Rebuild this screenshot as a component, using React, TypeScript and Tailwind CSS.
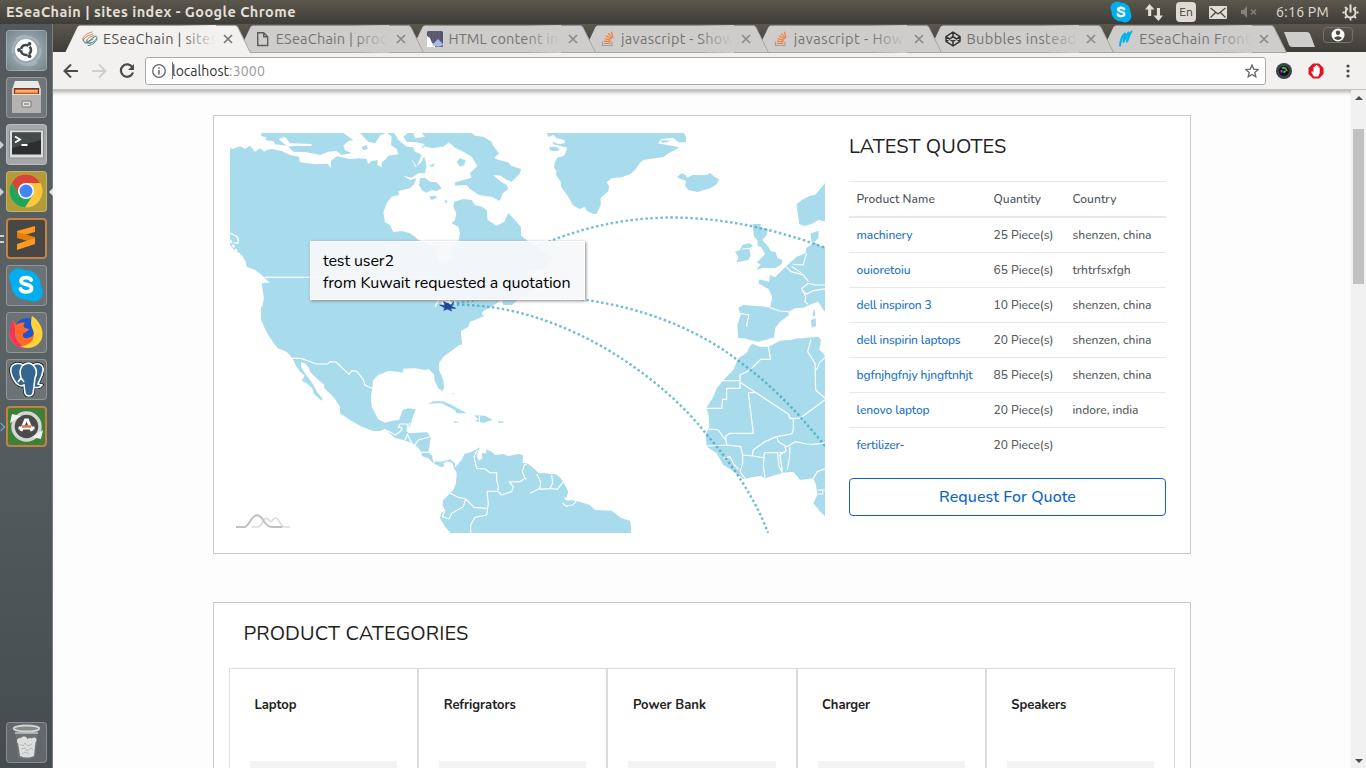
import React, { useLayoutEffect, useRef } from "react";

/* Text tracked so that it fills the given width */
function Fit({ w, className = "", children }: { w: number; className?: string; children: React.ReactNode }) {
  const ref = useRef<HTMLSpanElement>(null);
  useLayoutEffect(() => {
    const el = ref.current;
    if (!el) return;
    el.style.letterSpacing = "0px";
    const n = (el.textContent || "").length;
    el.style.letterSpacing = (w - el.getBoundingClientRect().width) / n + "px";
  }, [w, children]);
  return <span ref={ref} className={"inline-block whitespace-pre " + className}>{children}</span>;
}

const UB = "font-['Ubuntu','Noto_Sans',sans-serif]";

function Swirl() {
  return (
    <svg width="16" height="16" viewBox="0 0 16 16" fill="none" strokeWidth="1" strokeLinecap="round">
      <path d="M1 7.500C2 4 6 2 10 1M1.500 9.500c1-4 5-5 9-6.500M5 9c1-3 4-3 7-4.500" stroke="#d98456" />
      <path d="M6 14.500c3 0 7-2 9-6.500M8 12c3-.5 6-2 7-6M3 12c3 1.500 4-2 8-4" stroke="#3f8c8a" />
      <path d="M1 8c0 4 3 4 6 2s4-4 7-5M5 9c-1 3 1 4 4 3" stroke="#5a7772" />
    </svg>
  );
}
function DocIcon() {
  return (
    <svg width="16" height="16" viewBox="0 0 16 16" fill="none" stroke="#5c5c5c" strokeWidth="1.400">
      <path d="M2.700 1.700h6l4 4v8.800h-10zM8.700 1.700v4h4" />
    </svg>
  );
}
function ChartIcon() {
  return (
    <svg width="16" height="16" viewBox="0 0 16 16">
      <rect width="16" height="16" rx="1.500" fill="#55556b" />
      <path d="M3 0v8M6 0v12M9 0v12M12 0v8" stroke="#66667c" />
      <path d="M0 5l3 2 2 5 3 2v2H0z" fill="#fff" />
      <path d="M5 14l3-3 3-3 3 3 2 2v1q-4 3-8 1z" fill="#a5bbe2" />
    </svg>
  );
}
function StackIcon() {
  return (
    <svg width="16" height="16" viewBox="0 0 16 16" fill="none">
      <path d="M2.500 10.500v4h9.500v-4" stroke="#9aa2a6" strokeWidth="1.200" />
      <path d="M4 12.500h6.500M4 10.200l6.500.7M4.600 7.500l6.200 1.900M6 4.800l5.500 3.300M8.300 2.300l4 5M11.300 .8l1.800 5.800" stroke="#f47b3c" strokeWidth="1.200" />
    </svg>
  );
}
function PenIcon() {
  return (
    <svg width="16" height="16" viewBox="0 0 16 16" fill="none" stroke="#333" strokeWidth="1.500" strokeLinejoin="round">
      <path d="M8 1l7 4.700v4.600L8 15 1 10.300V5.700zM8 1v4.600M8 15v-4.600M1 5.700l7 4.700 7-4.700M1 10.300l7-4.700 7 4.700" />
    </svg>
  );
}
function Brush() {
  return (
    <svg width="16" height="18" viewBox="0 0 16 18" fill="none" stroke="#00b4f0" strokeWidth="2" strokeLinecap="round" strokeLinejoin="round">
      <path d="M2 15.500C2.500 11 4.500 5 7 3.500 7.500 6 5.500 9 5.500 12 7.500 9 8.500 4.500 10.500 2.500c.5 3-1.500 6-1.500 9C11 8 11.500 4 13.500 1.500" />
    </svg>
  );
}

const tabs = [
  { t: "ESeaChain | sites", w: 114, icon: <Swirl /> },
  { t: "ESeaChain | proc", w: 111, icon: <DocIcon /> },
  { t: "HTML content in", w: 110, icon: <ChartIcon /> },
  { t: "javascript - Show", w: 113, icon: <StackIcon /> },
  { t: "javascript - How", w: 110, icon: <StackIcon /> },
  { t: "Bubbles instead", w: 110, icon: <PenIcon /> },
  { t: "ESeaChain Front", w: 112, icon: <Brush /> },
];
const zs = ["z-[7]", "z-[6]", "z-[5]", "z-[4]", "z-[3]", "z-[2]", "z-[1]"];

function Tab({ i }: { i: number }) {
  const a = i === 0;
  const { t, w, icon } = tabs[i];
  return (
    <div className={"relative h-7 w-[172.700px] flex-none " + zs[i]}>
      <svg className="absolute left-0 top-0 overflow-visible" width="186" height="28">
        <path d="M-1 28L11.500 2Q12.500 .5 14 .5H169Q171 .5 172 2.500L184.500 28Z" fill={a ? "#f2f1f0" : "#cfcdcb"} />
        <path d={a ? "M169 .5Q171 .5 172 2.500L184.500 28" : "M169 .5Q171 .5 172 2.500L184.500 27.500H0"} fill="none" stroke="#a8a6a3" />
      </svg>
      <div className="relative flex h-7 items-center pl-4">
        <span className="flex w-[21px] items-center">{icon}</span>
        <span className="relative w-[113px] overflow-hidden">
          <Fit w={w} className={"text-[14.500px] leading-7 " + UB + (a ? " text-[#515151]" : " text-[#737373]")}>{t}</Fit>
          <span className={"absolute right-0 top-0 h-7 w-9 bg-linear-to-r from-transparent " + (a ? "to-[#f2f1f0]" : "to-[#cfcdcb]")} />
        </span>
        <svg className="ml-[7px]" width="10" height="10" stroke={a ? "#777" : "#8b8b8b"} strokeWidth="1.700"><path d="M1 1l8 8M9 1l-8 8" /></svg>
      </div>
    </div>
  );
}

function TopBar() {
  return (
    <div className={"flex h-6 flex-none items-center bg-linear-to-b from-[#5b574d] to-[#3e3d38] pl-[6px] text-[#e3dfd6] " + UB}>
      <Fit w={290} className="text-[14.500px] font-bold">ESeaChain | sites index - Google Chrome</Fit>
      <div className="ml-auto flex items-center pr-[7px]">
        <svg width="22" height="22" viewBox="0 0 22 22"><circle cx="7" cy="7" r="6.500" fill="#00aff0" /><circle cx="15" cy="15" r="6.500" fill="#00aff0" /><circle cx="11" cy="11" r="9.500" fill="#00aff0" /><path d="M14.200 8.200c-1-2-6-2-6 .4 0 2.700 6.200 1.600 6.200 4.500 0 2.600-5.700 2.800-6.700.2" fill="none" stroke="#fff" strokeWidth="2.300" strokeLinecap="round" /></svg>
        <svg className="ml-[13px]" width="18" height="17" viewBox="0 0 18 17" fill="#e3dfd6"><path d="M4.500 0l5 5.500H6.200V12H3.100V5.500H0zM13.500 17l-5-5.500h3.400V4H15v7.500h3z" /></svg>
        <span className="ml-[13px] flex h-5 w-5 items-center justify-center rounded-sm bg-[#dfdbd2] text-[12px] text-[#3c3b37]">En</span>
        <svg className="ml-[13px]" width="18" height="13" viewBox="0 0 18 13"><rect width="18" height="13" rx="1" fill="#e3dfd6" /><path d="M1.500 2L9 8l7.500-6M1.500 11.500L6.500 6.500M16.500 11.500l-5-5" fill="none" stroke="#474640" strokeWidth="1.200" /></svg>
        <svg className="ml-[13px]" width="18" height="12" viewBox="0 0 18 12"><path d="M1 4h2.500L7 0v12L3.500 8H1z" fill="#85827b" /><path d="M11 3.500l5 5M16 3.500l-5 5" stroke="#85827b" strokeWidth="1.500" /></svg>
        <Fit w={53} className="ml-[18px] text-[14px]">6:16 PM</Fit>
        <svg className="ml-[13px]" width="17" height="17" viewBox="0 0 17 17" fill="none" stroke="#e3dfd6">
          <path d="M5.800 4.300A5 5 0 1 0 11.200 4.300M8.500 .5v8" strokeWidth="2" />
          <path d="M.5 8.500h2M14.500 8.500h2M3 3l1.500 1.500M14 3l-1.500 1.500M3 14l1.500-1.500M14 14l-1.500-1.500M8.500 14v2.500" strokeWidth="1.800" />
        </svg>
      </div>
    </div>
  );
}

const tile = "relative flex h-[41px] w-[41px] flex-none items-center justify-center rounded-[4px] border border-white/25 ";
const Pip = () => <span className="absolute -left-[7px] top-[16px] border-y-[4px] border-l-[4px] border-y-transparent border-l-[#ccd0d2]" />;

function Dock() {
  return (
    <div className="flex w-[53px] flex-none flex-col gap-[6px] border-r border-[#777d80] bg-linear-to-b from-[#52585b] via-[#5b6264] via-40% to-[#454c50] pl-[5.500px] pt-[5.500px]">
      <div className={tile + "bg-radial from-[#b7c2c6] to-[#71838a]"}>
        <svg width="41" height="41" viewBox="0 0 41 41" className="absolute" fill="none" stroke="#a6b4b9" strokeWidth="2"><path d="M7 23C5 12 15 5 25 8M34 18c2 11-8 18-18 15M10 9c7-6 20-2 23 6M31 32c-7 6-20 2-23-6" /></svg>
        <span className="relative flex h-[22px] w-[22px] items-center justify-center rounded-full bg-white">
          <svg width="22" height="22" viewBox="0 0 22 22"><circle cx="11" cy="11" r="5" fill="none" stroke="#3f474b" strokeWidth="2.600" strokeDasharray="9.100 1.370" strokeDashoffset="-6" /><g fill="#3f474b"><circle cx="4" cy="11" r="1.900" /><circle cx="14.500" cy="4.800" r="1.900" /><circle cx="14.500" cy="17.200" r="1.900" /></g></svg>
        </span>
      </div>
      <div className={tile + "bg-[#70777a]"}>
        <svg width="33" height="35" viewBox="0 0 33 35"><path d="M5 1h23l3 9H2z" fill="#e9e9e9" /><rect x="2" y="8" width="29" height="25" rx="1" fill="#c9c9c9" /><rect x="4" y="8" width="25" height="6" fill="#6d3a1d" /><path d="M5 9.500h23v4H5z" fill="#f08a42" /><path d="M6 11h21" stroke="#ffd2a5" /><path d="M2 14h29v19H2z" fill="#b4b3b2" /><path d="M2 14.500h29" stroke="#ddd" /><rect x="12" y="21" width="9" height="6" rx="1" fill="#ddd" stroke="#777" /><path d="M14 24h5" stroke="#666" /></svg>
      </div>
      <div className={tile + "bg-[#a4a7a9]"}>
        <Pip />
        <svg width="35" height="31" viewBox="0 0 35 31"><rect x=".5" y="1" width="34" height="28" rx="1" fill="#dedede" stroke="#8a8a8a" /><rect x="3" y="3.500" width="29" height="22" fill="#2b2f30" /><path d="M3 3.500h29V11L3 19z" fill="#454a4b" /><path d="M6 7.500l5 3-5 3M12.500 16h6" fill="none" stroke="#fff" strokeWidth="1.800" /></svg>
      </div>
      <div className={tile + "bg-[#b29b3b]"}>
        <Pip />
        <span className="absolute left-[42px] top-[16px] border-y-[4px] border-r-[4px] border-y-transparent border-r-[#e5e7e8]" />
        <svg width="34" height="34" viewBox="0 0 34 34"><circle cx="17" cy="17" r="16.500" fill="#fdc73d" /><path d="M17 .5A16.500 16.500 0 0 0 2.700 8.700L10 21l7-12h14.300A16.500 16.500 0 0 0 17 .5z" fill="#d9453b" /><path d="M2.700 8.700A16.500 16.500 0 0 0 16 33.500L24 21 10.500 21z" fill="#23a35b" /><circle cx="17" cy="17" r="8" fill="#fff" /><circle cx="17" cy="17" r="6.500" fill="#4285f4" /></svg>
      </div>
      <div className="relative flex h-[41px] w-[41px] flex-none items-center justify-center rounded-[4px] border-2 border-[#c68240] bg-[#484746]">
        <span className="absolute -left-[8px] top-[15px] h-[8px] w-[4px] border-y-2 border-[#ccd0d2]" />
        <svg width="20" height="26" viewBox="0 0 20 26" fill="#ff9a1e"><path d="M1 6l18-5v6L1 12z" /><path d="M1 7l18 5v6L1 13z" fill="#e27e0c" /><path d="M1 19l18-6v6L1 25z" /></svg>
      </div>
      <div className={tile + "bg-[#6c7376]"}>
        <svg width="36" height="36" viewBox="0 0 22 22"><circle cx="6.500" cy="6.500" r="5.800" fill="#00aff0" /><circle cx="15.500" cy="15.500" r="5.800" fill="#00aff0" /><circle cx="11" cy="11" r="9" fill="#00aff0" /><path d="M14.200 8c-1-2.200-6.200-2-6.200.5 0 2.700 6.400 1.600 6.400 4.500 0 2.700-5.900 2.900-6.800.3" fill="none" stroke="#fff" strokeWidth="2.300" strokeLinecap="round" /></svg>
      </div>
      <div className={tile + "bg-[#6c7376]"}>
        <svg width="34" height="34" viewBox="0 0 34 34"><circle cx="18" cy="15" r="12" fill="#1f55cf" /><path d="M4 5l3 5c3-2 6-3 9-2-2 2-2 4 0 5l4 1c-1 3-4 3-6 5-1 3 2 5 5 4 4-1 6-3 6-7 2 8-1 16-9 17C7 33 0 26 .5 18 1 12 3 9 4 5z" fill="#ff6a2b" /><path d="M4 5C0 12-1 22 5 28c3 4 8 6 13 5-8-3-13-9-12-17 0-4-1-7-2-11z" fill="#f0355e" /><path d="M23 1c6 4 10 10 10.500 17C34 27 27 33 18 33c-3 0-5-1-7-2 8 0 14-4 14-12 0-5-5-7-2-18z" fill="#ffd23c" /></svg>
      </div>
      <div className={tile + "bg-[#6c7376]"}>
        <svg width="35" height="35" viewBox="0 0 35 35" fill="#336791" stroke="#fff" strokeWidth="1.600"><path d="M2 6C4 0 12 1 14 3c5-3 8-2 10 0 6-3 11 0 10 6-1 6-4 10-5 13l4 1c-2 3-6 3-8 2-1 5 0 9-5 9s-4-4-5-11l-2 1c-4 0-4-2-6-3C4 17 1 11 2 6z" stroke="#111" strokeWidth="3" /><path d="M2 6C4 0 12 1 14 3c5-3 8-2 10 0 6-3 11 0 10 6-1 6-4 10-5 13l4 1c-2 3-6 3-8 2-1 5 0 9-5 9s-4-4-5-11l-2 1c-4 0-4-2-6-3C4 17 1 11 2 6z" /><path d="M14 3c-4 4-3 8-2 13l3 4M24 3c4 4 4 9 2 13l-1 8M12 16l-3 4" fill="none" /></svg>
      </div>
      <div className="relative flex h-[41px] w-[41px] flex-none items-center justify-center rounded-[4px] border-2 border-[#c58045] bg-[#3d8136]">
        <span className="absolute -left-[10px] top-[16px] h-[6px] w-[6px] rotate-45 border-r border-t border-[#70b8e0]" />
        <svg width="35" height="35" viewBox="0 0 35 35"><circle cx="17.500" cy="17.500" r="13.500" fill="#4b4b4b" stroke="#d5d5d5" strokeWidth="3.500" /><path d="M1 14L3 5l9 2zM34 21l-2 9-9-2z" fill="#f2f2f2" /><path d="M12 22l4.500-11h2L23 22M9.500 19h16" fill="none" stroke="#fff" strokeWidth="3" /><path d="M13 17.500h9" stroke="#e9733c" strokeWidth="2.500" /></svg>
      </div>
      <div className={tile + "mb-[5px] mt-auto bg-white/15"}>
        <svg width="31" height="37" viewBox="0 0 31 37"><path d="M4 5l3 28c1 3 16 3 17 0L27 5z" fill="#6d7274" /><g fill="#dededc"><circle cx="9" cy="17" r="3" /><circle cx="13" cy="16" r="3.500" /><circle cx="19" cy="17" r="3" /><circle cx="23" cy="16" r="2.500" /><path d="M7 18h17.500L23 32q-7 3-14 0z" /></g><path d="M9 20l3 2 2-3 3 3 4-2M10 25l4-1 2 3 4-3 2 2M11 30l3-2 4 2" fill="none" stroke="#b7b8b5" /><ellipse cx="15.500" cy="4.500" rx="12.800" ry="3" fill="#858a8b" stroke="#d3d5d1" strokeWidth="1.800" /><path d="M4 9h23" stroke="#c4c6c3" strokeWidth="1.500" /></svg>
      </div>
    </div>
  );
}

function Toolbar() {
  return (
    <div className="flex h-[38px] flex-none items-center border-b border-[#c5c4c2] bg-[#f2f1f0] pl-[10px]">
      <svg width="16" height="16" viewBox="0 0 16 16" fill="none" stroke="#4a4a4a" strokeWidth="2"><path d="M15 8H2M8 1.500L1.500 8 8 14.500" /></svg>
      <svg className="ml-3" width="16" height="16" viewBox="0 0 16 16" fill="none" stroke="#cfcecd" strokeWidth="2"><path d="M1 8h13M8 1.500L14.500 8 8 14.500" /></svg>
      <svg className="ml-3" width="16" height="16" viewBox="0 0 16 16" fill="none" stroke="#4a4a4a" strokeWidth="2.200"><path d="M13.500 4.500A6.200 6.200 0 1 0 14 9.500" /><path d="M15 1v6H9z" fill="#4a4a4a" stroke="none" /></svg>
      <div className="ml-[10px] flex h-7 w-[1121px] flex-none items-center rounded-[3px] border border-[#adabaa] bg-white pl-[6px] pr-[6px]">
        <svg width="14" height="14" viewBox="0 0 14 14" fill="none" stroke="#666"><circle cx="7" cy="7" r="6.300" strokeWidth="1.300" /><path d="M7 6v4.500M7 3.300v1.500" strokeWidth="1.500" /></svg>
        <span className="ml-[6px] h-[17px] w-px bg-[#777]" />
        <span className={"-ml-px pt-[2px] text-[14px] " + UB}><Fit w={57} className="text-[#333]">localhost</Fit><Fit w={36} className="text-[#999]">:3000</Fit></span>
        <svg className="ml-auto" width="14" height="14" viewBox="0 0 14 14" fill="none" stroke="#666" strokeWidth="1.300"><path d="M7 1l1.700 4.100 4.500.4-3.400 2.900 1 4.400L7 10.500l-3.800 2.300 1-4.400L.8 5.500l4.500-.4z" /></svg>
      </div>
      <svg className="ml-[10px]" width="16" height="16" viewBox="0 0 16 16"><circle cx="8" cy="8" r="8" fill="#3c4248" /><circle cx="8" cy="8" r="5" fill="#101214" /><path d="M6 5.500A3 3 0 0 1 10 6" stroke="#30c050" strokeWidth="2" fill="none" /><path d="M5.500 7v2.500" stroke="#e03bd8" strokeWidth="1.800" /><path d="M7.500 9.500l2-1.500" stroke="#2dbaf0" strokeWidth="1.700" /><path d="M10 6l1 2" stroke="#e9912b" strokeWidth="1.500" /></svg>
      <svg className="ml-4" width="16" height="16" viewBox="0 0 16 16"><path d="M5 .5h6L15.500 5v6L11 15.500H5L.5 11V5z" fill="#e8101f" /><path d="M6 13.500L3 9l1.200-.8L5.500 9V4h1.300V2.700H8V2h1.300v1h1.200v1.500h1.200V10l-1.500 3.500z" fill="#fff" /></svg>
      <svg className="ml-[22px]" width="4" height="14" fill="#4a4a4a"><circle cx="2" cy="2" r="1.600" /><circle cx="2" cy="7" r="1.600" /><circle cx="2" cy="12" r="1.600" /></svg>
    </div>
  );
}

/* Map panels are drawn at triple scale from four origins */
const NW = "translate(225 125) scale(.33333)";
const SW = "translate(225 320) scale(.33333)";
const NE = "translate(530 125) scale(.33333)";
const SE = "translate(530 330) scale(.33333)";

function WorldMap() {
  return (
    <svg width="595" height="400" viewBox="230 133 595 400" className="block overflow-hidden" fill="#a8dbec">
      <g transform={NW}>
        <path d="M15 68L22 72 45 64 60 72 75 62 90 80 105 70 118 80 133 68 122 60 120 48 125 38 108 32 110 20H735L750 32 775 35 800 50 803 60 822 85 808 98 820 105 850 112 858 122 888 132 885 145 860 170 845 165 828 152 805 150 825 168 845 180 850 192 833 205 825 228V260L850 263 870 285 888 305 888 330 905 345 950 370 985 400 960 430 900 440 960 470 900 510 885 522 860 540 835 540 830 524 800 545 775 558 770 568 778 572 750 585 735 590 730 605 708 618 710 660H150L130 630 115 600 108 560 117 520 110 475 133 472 110 450 90 435 65 425 62 410 50 390 30 378 15 360Z" />
        <g fill="#fff">
          <path d="M595 63L620 70 655 65 672 52 690 68 718 82 740 95 757 122 735 145 740 158 715 165 690 172 690 182 725 180 735 192 762 210 780 213 800 215 825 228 835 205 845 200 960 190V380L905 345 888 330 888 305 870 285 850 263 838 290 815 302 788 285 785 255 770 245 750 240 740 225 715 222 688 230 685 245 694 265 690 285 680 295 700 305 705 325 700 350 680 370 680 400 655 420 636 400 632 370 600 352 580 345 570 335 555 325 530 318 505 322 495 300 480 292 475 262 485 235 500 215 522 210 520 198 555 190 567 178 575 160 555 165 535 152 560 158 580 145 600 145 605 122 625 125 640 90 610 88 600 80Z" />
          <path d="M108 45L145 48 150 58 185 62 160 42 180 35 195 55 262 57 258 63 215 62 190 65 205 80 245 82 285 90 310 80 335 78 350 90 380 84 360 76 355 62 370 48 385 45 355 24H405L430 50 450 55 465 32 485 22 500 35 498 60 515 72 520 88 490 92 482 103 470 112 470 126 457 120 458 105 440 108 430 118 425 102 400 100 375 102 335 94 318 107 318 130 308 116 270 118 225 112 222 95 195 90 170 78 140 72 125 75Z" />
          <path d="M508 24L520 45 545 65 565 67 570 85 560 105 572 127 590 110 600 88 590 65 600 58 575 52 545 50 535 35 548 24ZM565 24L570 40 600 35 590 24Z" />
          <path d="M592 68L665 70 640 110 605 125Z" />
        </g>
        <path d="M410 66L425 60 428 72 415 76ZM585 160L600 158 615 170 635 172 650 190 635 198 620 195 605 203 590 195 582 180ZM695 110L705 100 722 106 718 120 705 125ZM612 215L630 212 636 218 620 225ZM657 225L668 228 664 236ZM555 72L590 90 575 125 558 100Z" />
        <path d="M15 325C32 330 45 338 38 355L28 352M62 428L90 450 130 472M120 457H640M660 515C630 525 635 545 622 565 640 575 660 560 680 555" fill="none" stroke="#fff" strokeWidth="4" />
        <path d="M16 345L24 362 38 382 52 400 60 418" fill="none" stroke="#fff" strokeWidth="6" strokeDasharray="10 5" />
        <path d="M650 525L690 522 692 540 675 555 650 548Z" fill="#fff" />
      </g>
      <g transform={SW}>
        <path d="M108-40V0L120 25 132 40 145 65 158 85 185 95 200 112 212 135 225 155 239 167 230 182 245 190 262 205 267 222 290 242 293 236 276 215 265 195 255 180 240 160 228 140 228 127 240 130 252 145 255 155 275 175 298 195 298 205 325 230 345 260 345 280 375 300 410 320 445 333 465 333 478 328 500 345 512 355 535 360 560 368 575 378 590 397 590 408 610 415 625 430 650 442 658 438 655 430 668 423 682 430 686 442 695 460 693 490 685 510 675 520 655 540 652 555 660 570 648 580 645 595 660 620 678 640H970V460H942L910 432 892 428 895 405 880 402 850 408 835 402 810 405 800 395 782 388 785 400 770 400 772 415 764 422 757 415 757 400 765 382 740 395 718 402 710 420 690 440 690 430 675 418 650 425 628 424 620 405 610 397 618 350 605 337 575 338 548 340 555 320 560 300 572 268 550 265 533 270 522 300 500 303 480 308 460 298 440 260 438 230 442 205 445 180 460 165 490 153 520 155 532 159 535 146 570 145 600 150 612 148 628 165 628 180 640 205 652 213 657 205 655 180 642 150 642 130 655 110 690 85 712 68 705 45 708 30 725 20 733 0V-40Z" />
        <path d="M608 252L625 244 655 244 680 255 725 280 695 280 690 270 650 250 630 250ZM748 286L780 287 803 300 775 308 748 303 760 299ZM685 304L705 306 690 309ZM732 303L748 304ZM820 304H835V308H820ZM684 218L688 223H683ZM519 537L525 542Z" />
        <path d="M200 115H228L275 132H308L315 125 333 126 372 163 380 152 395 154 415 178 420 195 443 206M478 328L512 345 530 330V322H520L525 312H547V335M553 308L550 335M548 340L540 360M570 375L580 360 618 350M560 368L548 345M590 397H612M623 410L628 430M690 440L700 430M757 390L747 410 755 445 780 447 795 458H815V480L820 500 818 514H787V525L790 550 785 585M785 565L748 562 722 537 700 532 675 520M820 515L830 525 860 515 865 500 853 486 885 485 900 475 892 455 898 435 910 432M900 475L915 480 912 500 922 518 945 508 935 485 945 462M945 508H970M722 537L715 560 680 580 672 597 652 590 660 570M785 585L750 592 737 615 737 640M763 287V305" fill="none" stroke="#fff" strokeWidth="3.500" strokeLinejoin="round" />
        <path d="M80 621H98C112 621 112 595 123 595C132 595 133 605 138 605C143 605 143 594 151 594C163 594 166 621 178 621H195" fill="none" stroke="#ddd" strokeWidth="5" />
        <path d="M33 621H58C72 621 78 586 96 586C116 586 116 621 140 621H172" fill="none" stroke="#c0c0c0" strokeWidth="6" />
      </g>
      <g transform={NE}>
        <path d="M50 22L55 36 70 30 80 40 104 45 103 55 85 57 68 50 70 58 112 68 103 92 82 98 75 110 72 128 80 138 78 150 92 170 93 185 115 215 128 240 148 252 165 246 170 257 190 267 200 267 212 240 212 220 235 198 237 183 230 172 245 160 275 157 300 148 315 135 330 113 340 105 360 102 400 96 415 85 448 68 440 65 383 55 395 42 430 38 445 52H468V35L460 22ZM58 65L80 65 90 75 75 79 60 76ZM395 45L420 47 412 52 395 53ZM440 157L455 145 467 150 470 158 488 150 530 150 540 143 553 155 567 163 560 178 540 190 522 195 503 201 475 195 465 182 468 168Z" />
        <path d="M888 170L868 195 855 210 840 212 815 225 800 238 803 265 808 298 825 303 850 295 865 285 888 290ZM668 297H693L690 308 714 313 710 330 697 345 715 365 722 378 737 382 742 398 757 405 755 418 735 430 700 428 678 435 692 418 680 413 693 400 705 388 695 368 683 362 682 345 672 335ZM637 360L658 354 668 362 658 373 662 392 655 405 620 412 625 395 615 380 630 375ZM842 325L866 317 865 340 853 350 870 362 888 368V562L880 555 865 530 850 535 820 548 795 550 775 560 777 570 750 590 735 610 732 640H625L622 600 632 570 625 548 640 540 705 545 720 548 727 515 715 492 685 475 688 463 717 470 720 450 735 457 765 427 800 395 827 385 828 370 845 358ZM850 558L855 555V574L848 572ZM843 585L857 580 858 602 845 608ZM773 598L778 602ZM800 645L825 638 865 636 868 645Z" />
        <path d="M768 425L783 440 820 450 835 470M835 475L815 490 827 515 825 530 835 538M790 418L820 420 825 400 830 385M835 475L855 480 888 480M815 495L830 507 850 497 888 491M720 548L750 558 775 560M630 565L657 570 650 600V640M785 424L815 445M637 372L660 370M843 352H860" fill="none" stroke="#fff" strokeWidth="3.500" />
      </g>
      <g transform={SE}>
        <path d="M-10 400L8 412 28 432H75L88 440 100 455 115 485 110 500 95 522 100 510 130 510 180 525 195 540 245 542 275 565 300 572 303 590V610H-10ZM627-10L630 20 660 30 685 35 715 28 735 0V-10Z" />
        <path d="M668 42L690 50 715 50 750 32 780 30 805 25 840 28 865 20 873 30 868 60 880 70 888 85V560L875 550 850 520 862 495 858 465 850 445 810 450 790 425 760 428 705 445 690 437 640 447 605 420 580 405 560 370 530 350 527 315 538 290 535 250 528 235 550 200 560 175 580 150 610 120 625 85 650 68 662 45Z" />
        <path d="M667 35L670 42M715 50L722 88H692L660 120 630 135V175H590V208H578L575 235H528M575 152H630M630 157L775 252 780 265H790V300L785 312 740 320 705 335 670 360 667 378 638 375 632 350 590 345 587 318 600 310H670L655 188H678M785 265H810L888 207M843 28L833 65 855 100 857 180 888 207M888 80L868 98 860 120M535 300L545 297 565 300 590 335M530 348L600 345M740 320L745 335 770 350 780 345 795 335 830 342 850 343 888 338M638 375V400L630 425 645 445M703 368H743L747 410 758 428M703 368L700 410 705 443M638 375L670 378 700 383M780 350L778 385 772 420M747 368H765M765 350L768 362 750 375 757 425M580 385L600 380 610 400 625 418M850 445L862 425 888 415M862 480H888M862 492H878V480" fill="none" stroke="#fff" strokeWidth="3.600" strokeLinejoin="round" />
        <path d="M103 502L112 510 130 508 138 515 128 525 108 528 98 520M20 432L32 455 30 475 0 490M65 435L68 460 60 475 30 478M60 475L82 478 100 455" fill="none" stroke="#fff" strokeWidth="3.600" />
      </g>
      <g fill="none" stroke="#3aa5c2" strokeOpacity=".72" strokeWidth="2.400" strokeDasharray="2.500 2.500">
        <path d="M447 305C515 245 595 217.500 673 217.500C728 218 777 230 826 248" />
        <path d="M447 305C585 277 690 322 740 362C773 386 800 415 825 446" />
        <path d="M447 305C560 300 665 380 707 435C733 465 756 500 768 533" />
      </g>
      <g transform={NW}><path d="M644 540L660 541 655 529 666 534 678 540 687 528 680 544 692 550 676 550 680 558 668 552 656 556 660 549Z" fill="#1e4a9c" stroke="#1e4a9c" strokeWidth="2" /></g>
    </svg>
  );
}

const rows = [
  ["machinery", 56, "25 Piece(s)", "shenzen, china", 79],
  ["ouioretoiu", 54, "65 Piece(s)", "trhtrfsxfgh", 58],
  ["dell inspiron 3", 75, "10 Piece(s)", "shenzen, china", 79],
  ["dell inspirin laptops", 104, "20 Piece(s)", "shenzen, china", 79],
  ["bgfnjhgfnjy hjngftnhjt", 116, "85 Piece(s)", "shenzen, china", 79],
  ["lenovo laptop", 73, "20 Piece(s)", "indore, india", 66],
  ["fertilizer-", 48, "20 Piece(s)", "", 0],
] as const;

const cats: [string, number][] = [["Laptop", 42], ["Refrigrators", 72], ["Power Bank", 73], ["Charger", 48], ["Speakers", 55]];

function Quotes() {
  return (
    <div className="ml-6 w-[317px] text-[12px] font-medium">
      <h2 className="flex h-[28px] items-center text-[20px] font-normal text-[#212121]"><Fit w={157.500}>LATEST QUOTES</Fit></h2>
      <div className="mt-[20px] flex h-[37px] items-center border-b-2 border-t border-[#e3e8f1] pl-[7.500px] text-[#4b5157]">
        <span className="w-[137px]"><Fit w={78.500}>Product Name</Fit></span>
        <span className="w-[79px]"><Fit w={47.500}>Quantity</Fit></span>
        <Fit w={44}>Country</Fit>
      </div>
      {rows.map((r, i) => (
        <div key={i} className={"flex h-[35px] items-center border-b pl-[7.500px] text-[#565b60] " + (i < 6 ? "border-[#e3e8f1]" : "border-transparent")}>
          <span className="w-[137px] text-[#1670c8]"><Fit w={r[1]}>{r[0]}</Fit></span>
          <span className="w-[79px]"><Fit w={60}>{r[2]}</Fit></span>
          {r[3] && <Fit w={r[4]}>{r[3]}</Fit>}
        </div>
      ))}
      <button className="mt-[15px] flex h-[38px] w-full items-center justify-center rounded-[4px] border border-[#0d66c2] text-[16px] text-[#0d66c2]"><Fit w={137}>Request For Quote</Fit></button>
    </div>
  );
}

export default function App() {
  return (
    <div className="flex h-[768px] w-[1366px] flex-col overflow-hidden bg-[#fdfdfd]">
      <TopBar />
      <div className="flex min-h-0 flex-1">
        <Dock />
        <div className="flex min-w-0 flex-1 flex-col">
          <div className="flex h-7 flex-none items-start bg-linear-to-b from-[#5b574d] to-[#3e3d38] pl-[13px] pt-px">
            {tabs.map((_, i) => <Tab key={i} i={i} />)}
            <svg className="ml-[8px] mt-[7px] flex-none" width="33" height="15"><path d="M1 0h23q2 0 3 2l5 13H9q-2 0-3-2z" fill="#cfcdcb" /></svg>
            <span className="ml-[7px] mt-[2px] flex h-4 w-[30px] flex-none items-center justify-center rounded-sm border border-[#747168]">
              <svg width="14" height="14" viewBox="0 0 14 14"><circle cx="7" cy="7" r="6.500" fill="#fff" /><circle cx="7" cy="4.800" r="2.200" fill="#4b4943" /><path d="M2.800 10Q7 6.500 11.200 10 7 14 2.800 10z" fill="#4b4943" /></svg>
            </span>
          </div>
          <Toolbar />
          <div className="flex min-h-0 flex-1">
            <main className="min-w-0 flex-1 overflow-hidden bg-[#fdfdfd] pl-40 pt-[25px] font-['Nunito','Lato',sans-serif] shadow-[inset_0_5px_4px_-3px_#aaa]">
              <section className="flex h-[439px] w-[978px] border border-[#c9c9c9] bg-white pl-4 pt-[17px]">
                <div className="relative h-[400px] w-[595px] flex-none">
                  <WorldMap />
                  <div className="absolute left-[80px] top-[107.500px] h-[59px] w-[275px] border border-white bg-[#f5f8fa]/95 pl-[12px] pt-[8px] text-[16px] leading-[22px] text-black shadow-[1px_1px_3px_#888]">
                    <div><Fit w={71}>test user2</Fit></div>
                    <div><Fit w={247.500}>from Kuwait requested a quotation</Fit></div>
                  </div>
                </div>
                <Quotes />
              </section>
              <section className="mt-12 h-[240px] w-[978px] border border-[#c9c9c9] bg-white pl-[15px] pt-[17px]">
                <h2 className="flex h-[28px] items-center pl-[14.500px] text-[20px] text-[#212121]"><Fit w={225}>PRODUCT CATEGORIES</Fit></h2>
                <div className="mt-[20px] flex w-[946px]">
                  {cats.map(([c, w]) => (
                    <div key={c} className="h-[180px] flex-1 border border-[#dcdcdc] px-5 pt-[27px]">
                      <div className="h-[65px] pl-[4.500px] text-[13px] font-bold text-[#212121]"><Fit w={w}>{c}</Fit></div>
                      <div className="h-20 bg-[#f3f3f3]" />
                    </div>
                  ))}
                </div>
              </section>
            </main>
            <div className="flex w-[15px] flex-none flex-col items-center bg-[#f1f1f1] pb-[5px] pt-[6px]">
              <span className="border-x-[4px] border-b-[4px] border-x-transparent border-b-[#4d4d4d]" />
              <span className="mt-[29px] h-[155px] w-[11px] bg-[#c1c1c1]" />
              <span className="mt-auto border-x-[4px] border-t-[4px] border-x-transparent border-t-[#4d4d4d]" />
            </div>
          </div>
        </div>
      </div>
    </div>
  );
}
